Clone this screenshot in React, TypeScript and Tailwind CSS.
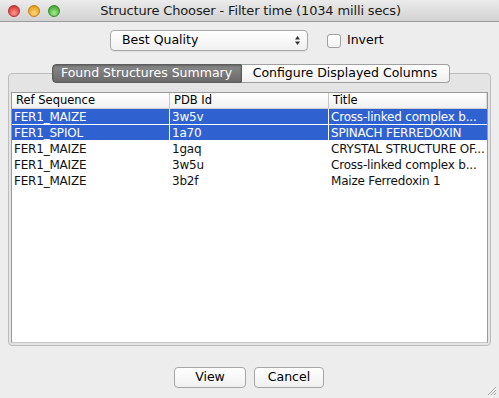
import React from "react";

const rows = [
  { ref: "FER1_MAIZE", pdb: "3w5v", title: "Cross-linked complex b...", sel: true },
  { ref: "FER1_SPIOL", pdb: "1a70", title: "SPINACH FERREDOXIN", sel: true },
  { ref: "FER1_MAIZE", pdb: "1gaq", title: "CRYSTAL STRUCTURE OF...", sel: false },
  { ref: "FER1_MAIZE", pdb: "3w5u", title: "Cross-linked complex b...", sel: false },
  { ref: "FER1_MAIZE", pdb: "3b2f", title: "Maize Ferredoxin 1", sel: false },
];

function Light({ from, to, border }: { from: string; to: string; border: string }) {
  return (
    <div
      className="w-[12px] h-[12px] rounded-full"
      style={{
        background: `radial-gradient(circle at 50% 70%, ${to} 0%, ${from} 80%)`,
        border: `1px solid ${border}`,
      }}
    />
  );
}

export default function App() {
  return (
    <div
      className="w-[499px] h-[398px] bg-[#ededed] flex flex-col relative overflow-hidden text-black"
      style={{ fontFamily: '"DejaVu Sans", "Liberation Sans", sans-serif' }}
    >
      {/* Title bar */}
      <div className="h-[22px] shrink-0 flex items-center relative bg-gradient-to-b from-[#ebebeb] to-[#d2d2d2] border-b border-[#9c9c9c]">
        <div className="flex gap-[8px] pl-[8px] items-center">
          <Light from="#d8352f" to="#ff9a94" border="#b3322c" />
          <Light from="#e59a12" to="#ffd77e" border="#c07f13" />
          <Light from="#3ea42f" to="#a6ee8f" border="#3a8a2c" />
        </div>
        <div className="absolute inset-0 flex items-center justify-center text-[13px] text-[#1a1a1a] tracking-[-0.15px] pl-[2px]">
          Structure Chooser - Filter time (1034 milli secs)
        </div>
      </div>

      {/* Combo row */}
      <div className="flex items-center mt-[8px] h-[21px]">
        <div className="ml-[110px] w-[198px] h-[21px] rounded-[4px] border border-[#a8a8a8] bg-gradient-to-b from-[#ffffff] to-[#f0f0f0] flex items-center justify-between pl-[11px] pr-[6px] text-[12.5px] shadow-[0_1px_0_rgba(0,0,0,0.05)]">
          <span>Best Quality</span>
          <svg width="7" height="11" viewBox="0 0 7 11">
            <path d="M3.5 1 L6 4.5 L1 4.5 Z" fill="#333" />
            <path d="M3.5 10 L6 6.5 L1 6.5 Z" fill="#333" />
          </svg>
        </div>
        <div className="ml-[19px] w-[14px] h-[14px] rounded-[3px] border border-[#a0a0a0] bg-gradient-to-b from-[#ffffff] to-[#f2f2f2]" />
        <span className="ml-[6px] text-[12.5px]">Invert</span>
      </div>

      {/* Tabbed pane */}
      <div className="mt-[13px] flex flex-col px-[8px]">
        <div className="flex justify-center relative z-10 -mb-[10px] pl-[2px]">
          <div className="w-[190px] h-[19px] rounded-l-[4px] border border-[#5c5c5c] bg-gradient-to-b from-[#8a8a8a] to-[#6a6a6a] text-white text-[12.5px] flex items-center justify-center shadow-[inset_0_1px_2px_rgba(0,0,0,0.3)]">
            Found Structures Summary
          </div>
          <div className="w-[208px] h-[19px] rounded-r-[4px] border border-l-0 border-[#a0a0a0] bg-gradient-to-b from-[#ffffff] to-[#f0f0f0] text-[12.5px] flex items-center justify-center">
            Configure Displayed Columns
          </div>
        </div>
        <div className="h-[273px] rounded-[4px] border border-[#bdbdbd] bg-[#e4e4e4] pt-[18px] px-[2px] pb-[2px] flex flex-col">
          <div className="flex-1 bg-white border border-[#9a9a9a] border-b-[#c8c8c8] flex flex-col">
            <div className="h-[16px] flex bg-gradient-to-b from-[#ffffff] to-[#f1f1f1] border-b border-[#cfcfcf] text-[11.5px]">
              <div className="w-[158px] pl-[4px] border-r border-[#c6c6c6] flex items-center">Ref Sequence</div>
              <div className="w-[159px] pl-[4px] border-r border-[#c6c6c6] flex items-center">PDB Id</div>
              <div className="flex-1 pl-[4px] flex items-center border-r border-[#d6d6d6]">Title</div>
            </div>
            {rows.map((r, i) => (
              <div
                key={i}
                className={
                  "h-[16px] flex text-[12px] tracking-[-0.2px] " +
                  (r.sel ? "bg-[#2f62d0] text-white border-b border-white" : "text-[#111]")
                }
              >
                <div className={"w-[158px] pl-[2px] flex items-center " + (r.sel ? "border-r border-white" : "")}>{r.ref}</div>
                <div className={"w-[159px] pl-[2px] flex items-center " + (r.sel ? "border-r border-white" : "")}>{r.pdb}</div>
                <div className="flex-1 pl-[2px] flex items-center whitespace-nowrap">{r.title}</div>
              </div>
            ))}
          </div>
        </div>
      </div>

      {/* Buttons */}
      <div className="flex justify-center gap-[8px] mt-[21px] pr-[1px]">
        <div className="w-[72px] h-[21px] rounded-[4px] border border-[#a6a6a6] bg-gradient-to-b from-[#ffffff] to-[#f0f0f0] flex items-center justify-center text-[12.5px]">
          View
        </div>
        <div className="w-[70px] h-[21px] rounded-[4px] border border-[#a6a6a6] bg-gradient-to-b from-[#ffffff] to-[#f0f0f0] flex items-center justify-center text-[12.5px]">
          Cancel
        </div>
      </div>

      {/* Resize grip */}
      <svg className="absolute right-[2px] bottom-[2px]" width="11" height="11" viewBox="0 0 11 11">
        <path d="M10 2 L2 10 M10 5 L5 10 M10 8 L8 10" stroke="#a8a8a8" strokeWidth="1" />
      </svg>
    </div>
  );
}
